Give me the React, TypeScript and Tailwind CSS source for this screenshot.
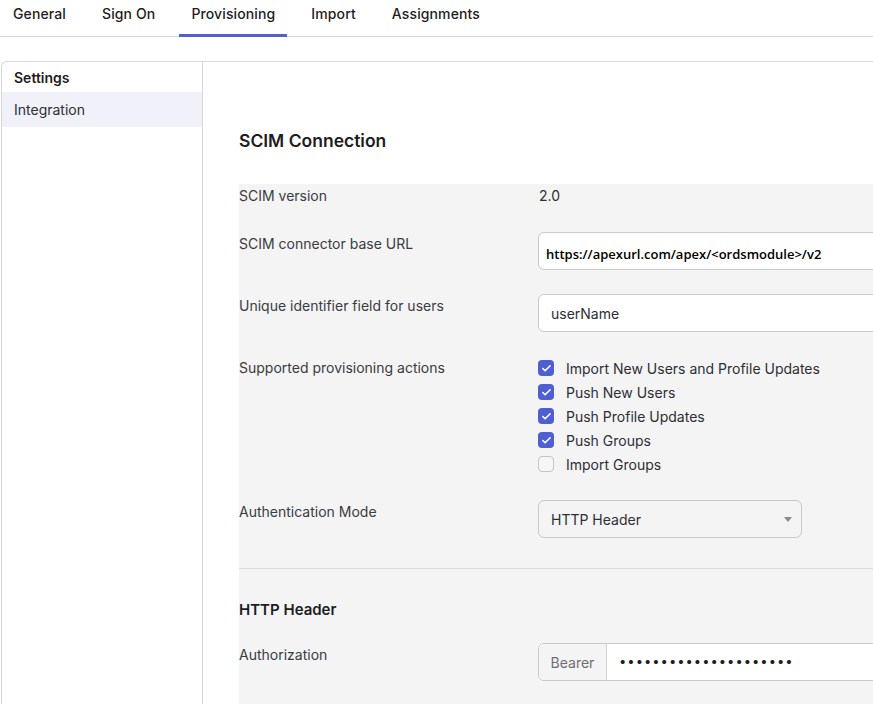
import { Check } from 'lucide-react'

const tabs = ['General', 'Sign On', 'Provisioning', 'Import', 'Assignments']

const actions = [
  { label: 'Import New Users and Profile Updates', checked: true },
  { label: 'Push New Users', checked: true },
  { label: 'Push Profile Updates', checked: true },
  { label: 'Push Groups', checked: true },
  { label: 'Import Groups', checked: false },
]

function Row({ label, children }: { label: string; children: React.ReactNode }) {
  return (
    <div className="grid grid-cols-[299px_1fr]">
      <div className="text-[14px] leading-[24px] text-[#3b3b41]">{label}</div>
      <div>{children}</div>
    </div>
  )
}

function Checkbox({ checked }: { checked: boolean }) {
  if (checked) {
    return (
      <span className="flex h-4 w-4 items-center justify-center rounded-[4px] bg-[#4f5fd3]">
        <Check size={11} strokeWidth={3.5} className="text-white" />
      </span>
    )
  }
  return <span className="h-4 w-4 rounded-[4px] border border-[#c4c4ca] bg-[#f6f6f6]" />
}

export default function App() {
  return (
    <div className="h-screen w-full overflow-hidden bg-white font-['Inter',sans-serif] text-[#1d1d21]">
      <nav className="flex h-[37px] gap-3 border-b border-[#d6d6da] pl-px">
        {tabs.map(t => (
          <div
            key={t}
            className={
              t === 'Provisioning'
                ? '-mb-px border-b-[3px] border-[#5360c9] px-3 pt-[5px] text-[14px] leading-[18px] font-medium tracking-[0.12px]'
                : '-mb-px border-b-[3px] border-transparent px-3 pt-[5px] text-[14px] leading-[18px] font-medium tracking-[0.12px]'
            }
          >
            {t}
          </div>
        ))}
      </nav>

      <div className="ml-px mt-[24px] flex h-full rounded-tl-[6px] border-l border-t border-[#d9d9dd]">
        <aside className="w-[201px] shrink-0 border-r border-[#d9d9dd]">
          <div className="flex h-[30px] items-center px-3 text-[14px] font-semibold">Settings</div>
          <div className="flex h-[35px] items-center bg-[#f0f1f9] px-3 text-[14px] text-[#2e2e34]">Integration</div>
        </aside>

        <main className="flex-1 pl-[36px]">
          <h2 className="pt-[67px] text-[17.5px] leading-[24px] font-semibold">SCIM Connection</h2>

          <section className="mt-[31px] bg-[#f4f4f4]">
            <div className="flex flex-col gap-6 border-b border-[#dddde0] pb-[30px]">
              <Row label="SCIM version">
                <div className="pl-px text-[14px] leading-[24px] text-[#2e2e34]">2.0</div>
              </Row>
              <Row label="SCIM connector base URL">
                <div className="flex h-[38px] w-[420px] items-center rounded-[6px] border border-[#c9c9ce] bg-white pl-[7px] pt-[8px] font-['Open_Sans',sans-serif] text-[13px] font-semibold text-black">
                  https://apexurl.com/apex/&lt;ordsmodule&gt;/v2
                </div>
              </Row>
              <Row label="Unique identifier field for users">
                <div className="flex h-[38px] w-[420px] items-center rounded-[6px] border border-[#c9c9ce] bg-white pl-3 text-[14px] text-[#2e2e34]">
                  userName
                </div>
              </Row>
              <Row label="Supported provisioning actions">
                <ul className="flex flex-col">
                  {actions.map(a => (
                    <li key={a.label} className="flex h-6 items-center gap-3 text-[14px] text-[#2e2e34]">
                      <Checkbox checked={a.checked} />
                      {a.label}
                    </li>
                  ))}
                </ul>
              </Row>
              <Row label="Authentication Mode">
                <div className="flex h-[38px] w-[264px] items-center justify-between rounded-[6px] border border-[#c9c9ce] pl-3 pr-[9px] text-[14px] text-[#2e2e34]">
                  HTTP Header
                  <svg width="8" height="5" viewBox="0 0 8 5" className="fill-[#8a8a90]">
                    <path d="M0 0h8L4 5z" />
                  </svg>
                </div>
              </Row>
            </div>

            <div className="flex flex-col pt-[29px] pb-10">
              <h3 className="text-[15px] leading-[24px] font-semibold">HTTP Header</h3>
              <div className="mt-[21px]">
                <Row label="Authorization">
                  <div className="flex h-[38px] w-[420px] overflow-hidden rounded-[6px] border border-[#c9c9ce] bg-white">
                    <div className="flex w-[68px] items-center justify-center border-r border-[#d6d6da] bg-[#f4f4f4] text-[14px] text-[#6e6e76]">
                      Bearer
                    </div>
                    <div className="flex items-center pl-3 text-[13px] tracking-[1px] text-[#1d1d21]">
                      {'•'.repeat(21)}
                    </div>
                  </div>
                </Row>
              </div>
            </div>
          </section>
        </main>
      </div>
    </div>
  )
}
